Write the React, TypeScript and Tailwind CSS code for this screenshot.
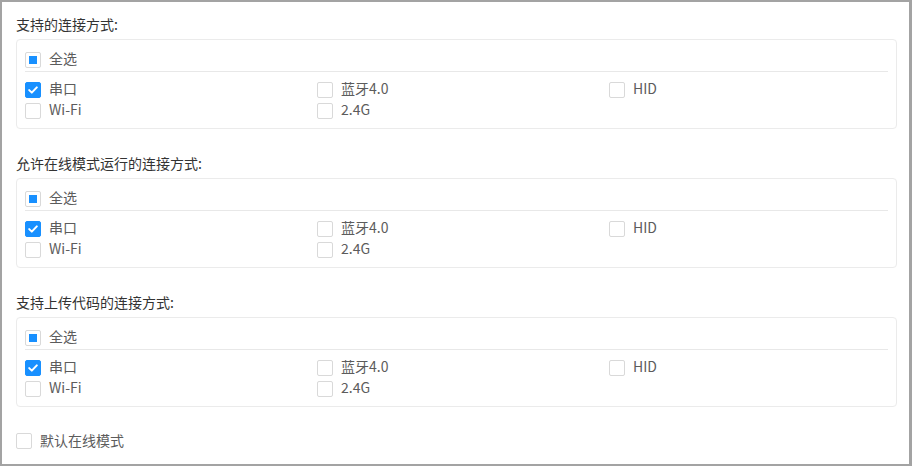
import React from "react";

type Opt = { label: string; checked?: boolean };

const options: Opt[] = [
  { label: "串口", checked: true },
  { label: "蓝牙4.0" },
  { label: "HID" },
  { label: "Wi-Fi" },
  { label: "2.4G" },
];

const sections = ["支持的连接方式:", "允许在线模式运行的连接方式:", "支持上传代码的连接方式:"];

const Box = ({ state }: { state?: "checked" | "half" }) => {
  if (state === "checked") {
    return (
      <span className="w-4 h-4 rounded-[2px] bg-[#1890ff] border border-[#1890ff] flex items-center justify-center shrink-0">
        <svg width="10" height="8" viewBox="0 0 10 8" fill="none">
          <path d="M1.2 4.1 L3.8 6.6 L8.8 1.4" stroke="#fff" strokeWidth="2" strokeLinecap="round" strokeLinejoin="round" />
        </svg>
      </span>
    );
  }
  return (
    <span className="w-4 h-4 rounded-[2px] bg-white border border-[#d9d9d9] flex items-center justify-center shrink-0">
      {state === "half" && <span className="w-2 h-2 bg-[#1890ff]" />}
    </span>
  );
};

const Item = ({ label, state, h }: { label: string; state?: "checked" | "half"; h: string }) => (
  <label className={`flex items-center gap-2 ${h} text-[14px] text-[#5c5c5c]`}>
    <Box state={state} />
    <span className="pb-[2px]">{label}</span>
  </label>
);

const Section = ({ title }: { title: string }) => (
  <div className="flex flex-col">
    <div className="h-[22px] leading-[20px] text-[14px] text-[#333] mb-[3px]">{title}</div>
    <div className="border border-[#ebebeb] rounded-[4px] px-2 pt-2 pb-[7px]">
      <Item label="全选" state="half" h="h-[23px]" />
      <div className="h-px bg-[#e8e8e8] mb-[7px]" />
      <div className="grid grid-cols-[292px_292px_1fr]">
        {options.map((o, i) => (
          <Item key={i} label={o.label} state={o.checked ? "checked" : undefined} h="h-[21px]" />
        ))}
      </div>
    </div>
  </div>
);

export default function App() {
  return (
    <div
      className="w-[912px] h-[466px] bg-white border-2 border-r-[3px] border-[#a3a3a3] pl-[14px] pr-[12px] pt-[12px] flex flex-col gap-6"
      style={{ fontFamily: '"Noto Sans CJK SC", "Noto Sans", sans-serif' }}
    >
      {sections.map((t) => (
        <Section key={t} title={t} />
      ))}
      <div className="-mt-px">
        <Item label="默认在线模式" h="h-[22px]" />
      </div>
    </div>
  );
}
